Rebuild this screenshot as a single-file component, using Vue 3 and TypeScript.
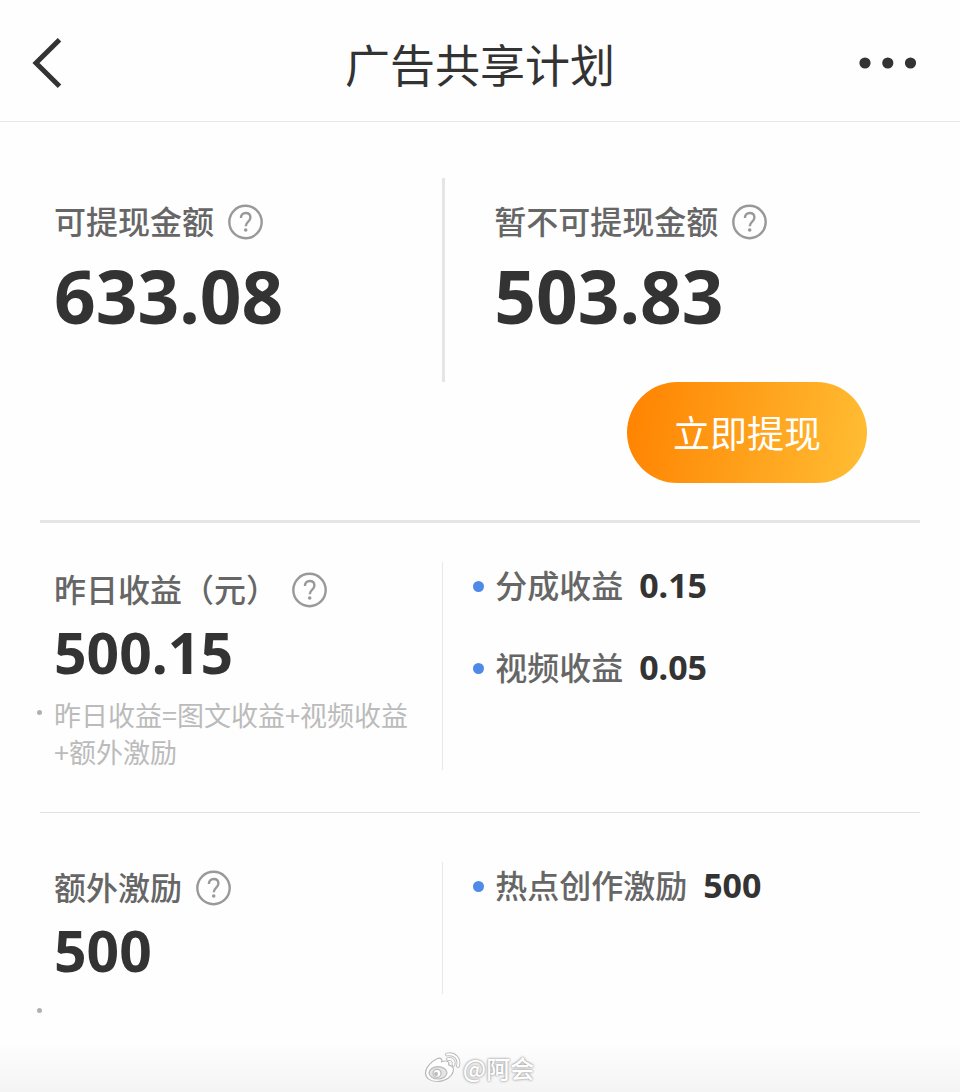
<script setup lang="ts">
import { h } from 'vue'

interface Detail {
  name: string
  value: string
}

const balances = [
  { label: '可提现金额', value: '633.08' },
  { label: '暂不可提现金额', value: '503.83' },
]

const yesterday: Detail[] = [
  { name: '分成收益', value: '0.15' },
  { name: '视频收益', value: '0.05' },
]

const extra: Detail[] = [{ name: '热点创作激励', value: '500' }]

const HelpButton = (props: { topic: string }) =>
  h('button', { class: 'help', type: 'button', 'aria-label': props.topic }, [
    h('svg', { viewBox: '0 0 36 36', width: 36, height: 36, fill: 'none', stroke: 'currentColor' }, [
      h('circle', { cx: 17.5, cy: 18, r: 16.2, 'stroke-width': 2.4 }),
      h('path', {
        d: 'M12.9 14c0-3 1.9-5 4.8-5 2.8 0 4.7 1.800 4.700 4.500 0 1.900-.9 3-2.400 4.400-1.500 1.300-2.200 2.200-2.200 4.400',
        'stroke-width': 2.4,
      }),
      h('circle', { cx: 17.7, cy: 26, r: 1.8, fill: 'currentColor', stroke: 'none' }),
    ]),
  ])
HelpButton.props = ['topic']
</script>

<template>
  <div class="page">
    <header class="bar">
      <button class="icon-button" type="button" aria-label="返回">
        <svg width="30" height="50" viewBox="0 0 30 50" fill="none" stroke="currentColor" stroke-width="5">
          <path d="M27.500 1.800 4 25 27.500 48.200" />
        </svg>
      </button>
      <h1>广告共享计划</h1>
      <button class="icon-button end" type="button" aria-label="更多">
        <svg width="58" height="12" viewBox="0 0 58 12" fill="currentColor">
          <circle cx="6" cy="6" r="5.600" />
          <circle cx="28.800" cy="6" r="5.600" />
          <circle cx="51.500" cy="6" r="5.600" />
        </svg>
      </button>
    </header>

    <main>
      <section class="balance">
        <div class="columns thick">
          <div v-for="item in balances" :key="item.label" class="cell">
            <h2>{{ item.label }}<HelpButton :topic="item.label" /></h2>
            <p class="amount large">{{ item.value }}</p>
          </div>
        </div>
        <button class="withdraw" type="button">立即提现</button>
      </section>

      <section class="yesterday">
        <div class="columns">
          <div class="cell">
            <h2>昨日收益（元）<HelpButton topic="昨日收益" /></h2>
            <p class="amount">500.15</p>
            <p class="note">昨日收益=图文收益+视频收益+额外激励</p>
          </div>
          <ul>
            <li v-for="item in yesterday" :key="item.name">
              {{ item.name }}<strong>{{ item.value }}</strong>
            </li>
          </ul>
        </div>
      </section>

      <section class="extra">
        <div class="columns">
          <div class="cell">
            <h2>额外激励<HelpButton topic="额外激励" /></h2>
            <p class="amount">500</p>
          </div>
          <ul>
            <li v-for="item in extra" :key="item.name">
              {{ item.name }}<strong>{{ item.value }}</strong>
            </li>
          </ul>
        </div>
        <div class="cell"><p class="note"></p></div>
      </section>
    </main>

    <footer>
      <svg width="38" height="32" viewBox="0 0 38 32" fill="#fff" stroke="#bbb" stroke-width="1.200">
        <path d="M12.500 7c3-1.800 6-.8 5.100 2.800 4-1.500 8.300-1 7.100 3.100 4 1.200 5.500 3.300 4.500 6.500-1.500 5.500-7.800 10.100-16 10.100C6 29.500 1.500 26 1.500 21 1.500 15.500 7.500 9.500 12.500 7z" />
        <ellipse cx="14" cy="20.800" rx="9" ry="6.200" fill="#e4e4e4" />
        <circle cx="13" cy="21.300" r="4" />
        <circle cx="12" cy="22" r="1.400" fill="#bbb" />
        <path d="M23 2.500c7.500-1.500 13 4 11 11.500M24 7c3.800-.7 6.500 2 5.500 5.800" fill="none" stroke="#bbb" stroke-width="3.800" stroke-linecap="round" />
        <path d="M23 2.500c7.500-1.500 13 4 11 11.500M24 7c3.800-.7 6.500 2 5.500 5.800" fill="none" stroke="#fff" stroke-width="2" stroke-linecap="round" />
      </svg>
      <span>@阿会</span>
    </footer>
  </div>
</template>

<style>
body {
  margin: 0;
  background: #fefefe;
}
</style>

<style scoped>
.page {
  display: flex;
  flex-direction: column;
  min-height: 100vh;
  color: #333;
  font-family: "Noto Sans CJK SC", "Noto Sans", sans-serif;
}

h1,
h2,
p,
ul {
  margin: 0;
  padding: 0;
}

button {
  padding: 0;
  border: 0;
  background: none;
  color: inherit;
  font: inherit;
  cursor: pointer;
}

.bar {
  display: grid;
  grid-template-columns: 1fr auto 1fr;
  align-items: center;
  padding: 4px 32px 0;
  min-height: 117px;
  border-bottom: 1px solid #e8e8e8;
}

.bar h1 {
  padding-top: 2px;
  font-size: 45px;
  font-weight: 400;
  line-height: 64px;
}

.icon-button {
  display: flex;
  justify-self: start;
}

.icon-button.end {
  justify-self: end;
  margin-right: 11px;
}

main {
  padding: 0 40px;
}

section + section {
  border-top: 1px solid #e2e2e2;
}

.columns {
  display: grid;
  grid-template-columns: 45.7% 1fr;
}

.columns > * + * {
  border-left: 1px solid #e8e8e8;
}

.columns.thick > * + * {
  border-left: 3px solid #e5e5e5;
}

.balance {
  display: flex;
  flex-direction: column;
  padding: 56px 0 37px;
}

.balance .cell {
  padding-top: 22px;
  padding-bottom: 38px;
}

section.yesterday {
  padding: 39px 0 42px;
  border-top: 3px solid #e5e5e5;
}

section.extra {
  padding-top: 49px;
}

.cell {
  padding-left: 14px;
}

.cell + .cell {
  padding-left: 49px;
}

h2 {
  display: flex;
  align-items: center;
  gap: 14px;
  color: #666;
  font-size: 32px;
  font-weight: 500;
  line-height: 40px;
}

.cell :deep(.help) {
  display: flex;
  margin-top: 4px;
  padding: 0;
  border: 0;
  background: none;
  color: #999;
  cursor: pointer;
}

.amount {
  font-family: "Noto Sans", sans-serif;
  font-size: 57px;
  font-weight: 700;
  line-height: 88px;
}

.amount.large {
  margin-top: 8px;
  font-size: 73px;
  line-height: 96px;
}

.withdraw {
  align-self: flex-end;
  margin-right: 53px;
  padding: 0 46px;
  border-radius: 51px;
  background: linear-gradient(100deg, #ff8200, #ffbe34);
  color: #fff;
  font-size: 37px;
  line-height: 101px;
}

.yesterday .cell {
  padding-top: 6px;
}

.extra .columns .cell {
  padding-top: 4px;
}

.note {
  display: flex;
  gap: 12px;
  margin-left: -17px;
  min-height: 37px;
  color: #bbb;
  font-size: 27px;
  line-height: 37px;
}

.note::before {
  flex: none;
  width: 5px;
  height: 5px;
  margin-top: 14px;
  border-radius: 50%;
  background: #b0b0b0;
  content: "";
}

ul {
  display: flex;
  flex-direction: column;
  gap: 42px;
  padding: 2px 0 0 30px;
  list-style: none;
}

li {
  display: flex;
  align-items: center;
  color: #666;
  font-size: 32px;
  font-weight: 500;
  line-height: 40px;
}

li::before {
  width: 11px;
  height: 11px;
  margin-top: 4px;
  margin-right: 11px;
  border-radius: 50%;
  background: #4f8ae8;
  content: "";
}

li strong {
  padding-top: 2px;
  margin-left: 16px;
  color: #333;
  font-family: "Noto Sans", sans-serif;
  font-size: 34px;
  font-weight: 700;
  line-height: 38px;
}

footer {
  display: flex;
  flex: 1;
  align-items: flex-end;
  justify-content: center;
  gap: 1px;
  padding: 0 2px 8px 0;
  background: linear-gradient(to top, #f4f4f4, #fefefe 50px);
  color: #fff;
  font-size: 24px;
  font-weight: 500;
  line-height: 32px;
  text-shadow: 0 0 2px #999, 0 0 3px #aaa;
}
</style>
